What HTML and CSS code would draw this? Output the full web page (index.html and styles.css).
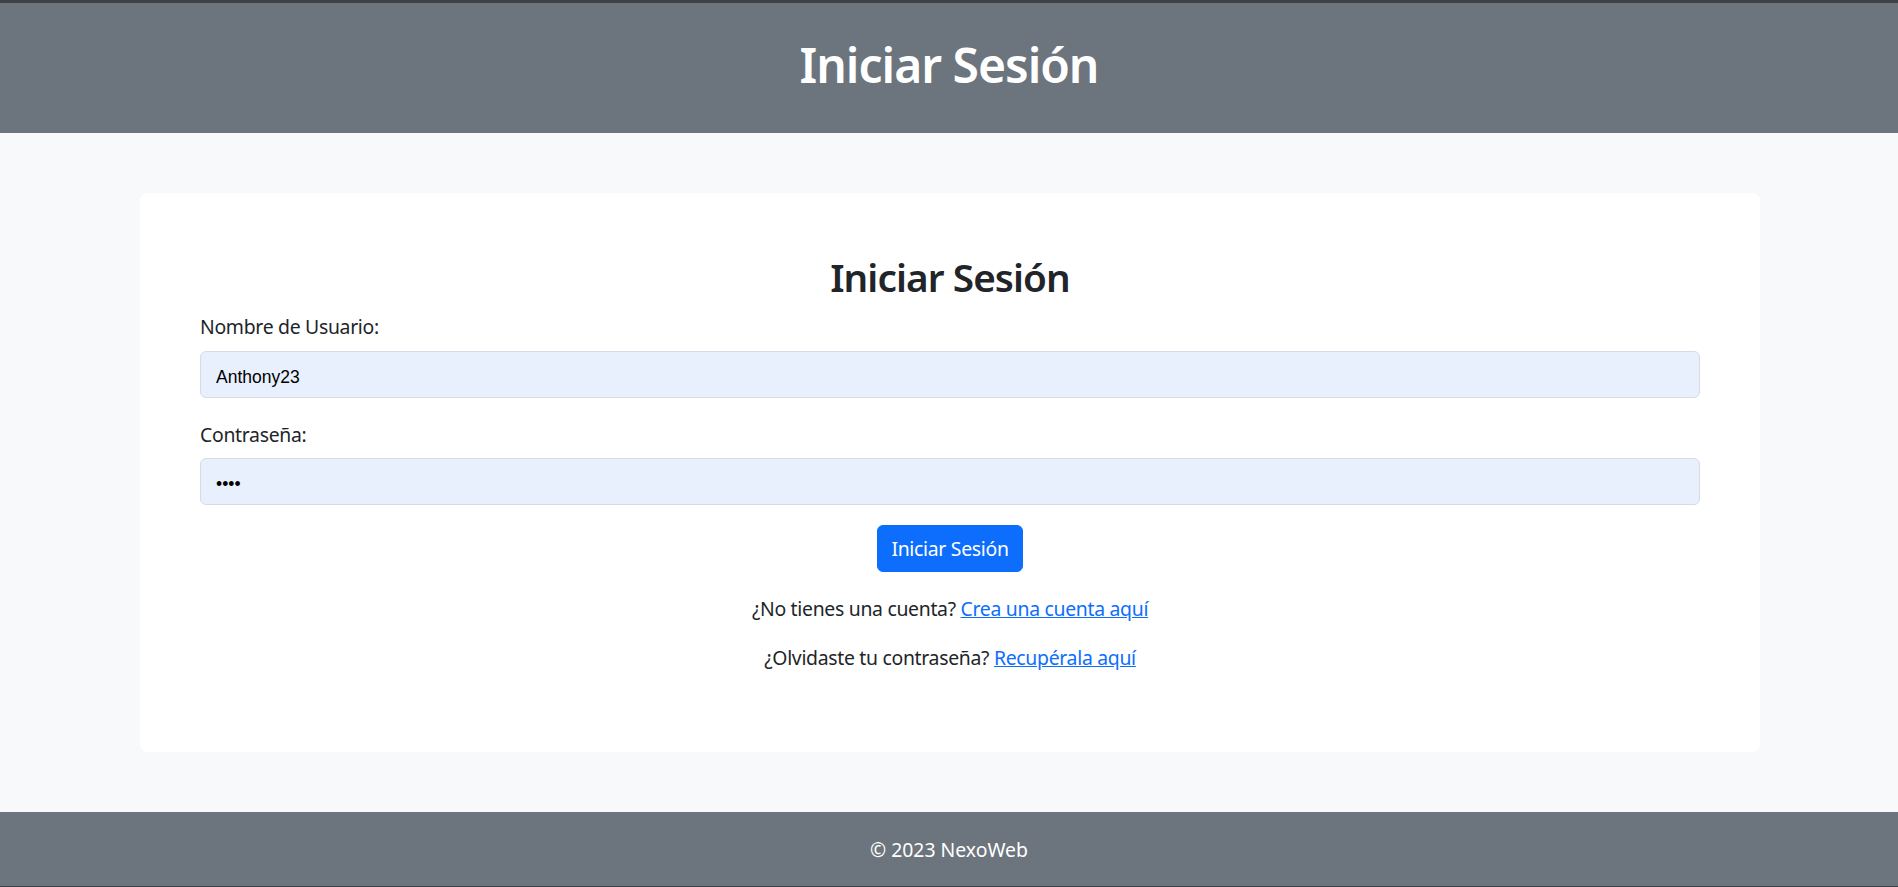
FILE: index.html
```html
<!DOCTYPE html>
<html lang="es">
<head>
<meta charset="utf-8">
<title>Iniciar Sesión</title>
<link rel="stylesheet" href="styles.css">
</head>
<body>
<header class="site-header">
  <h1 class="site-title">Iniciar Sesión</h1>
</header>
<main class="site-main">
  <section class="card">
    <h2 class="card-title">Iniciar Sesión</h2>
    <form class="login-form">
      <label class="form-label" for="user">Nombre de Usuario:</label>
      <input class="form-control" id="user" type="text" value="Anthony23">
      <label class="form-label second" for="pass">Contraseña:</label>
      <input class="form-control" id="pass" type="password" value="1234">
      <div class="btn-row"><button class="btn" type="button">Iniciar Sesión</button></div>
    </form>
    <p class="note first">¿No tienes una cuenta? <a href="#">Crea una cuenta aquí</a></p>
    <p class="note">¿Olvidaste tu contraseña? <a href="#">Recupérala aquí</a></p>
  </section>
</main>
<footer class="site-footer">
  <p class="copy">© 2023 NexoWeb</p>
</footer>
</body>
</html>
```

FILE: styles.css
```css
html, body {
  margin: 0;
  padding: 0;
}
body {
  background: #f8f9fa;
  font-family: "Noto Sans", "Open Sans", sans-serif;
  font-size: 19.4px;
  line-height: 29px;
  letter-spacing: -0.3px;
  color: #212529;
}
.site-header {
  border-top: 3px solid #3e4147;
  background: #6c757d;
  height: 130px;
  box-sizing: content-box;
}
.site-title {
  margin: 0;
  padding-top: 33px;
  text-align: center;
  color: #fff;
  font-size: 48px;
  font-weight: 600;
  letter-spacing: -1px;
  line-height: 58px;
}
.site-main {
  padding: 60px 138px 60px 140px;
}
.card {
  background: #fff;
  border-radius: 8px;
  padding: 61px 60px 60px 60px;
  height: 559px;
  box-sizing: border-box;
}
.card-title {
  margin: 0 0 12px;
  text-align: center;
  font-size: 38.7px;
  font-weight: 600;
  letter-spacing: -0.9px;
  line-height: 46px;
}
.login-form {
  display: flex;
  flex-direction: column;
}
.form-label {
  display: block;
  margin-bottom: 10px;
}
.form-label.second {
  margin-top: 22px;
  margin-bottom: 9px;
}
.form-control {
  box-sizing: border-box;
  height: 47px;
  width: 100%;
  margin: 0;
  padding: 5px 15px 0;
  border: 1px solid #d6dce5;
  border-radius: 6px;
  background: #e8f0fe;
  font-family: "Liberation Sans", Arial, sans-serif;
  font-size: 17.5px;
  letter-spacing: 0;
  color: #000;
  outline: none;
}
.btn-row {
  display: flex;
  justify-content: center;
  margin-top: 20px;
}
.btn {
  height: 47px;
  padding: 0 13.5px;
  border: 1px solid #0d6efd;
  border-radius: 6px;
  background: #0d6efd;
  color: #fff;
  font-family: inherit;
  font-size: 19.4px;
  letter-spacing: -0.3px;
  line-height: 45px;
}
.note {
  margin: 0;
  text-align: center;
}
.note.first {
  margin-top: 22px;
  margin-bottom: 20px;
}
.note a {
  color: #0d6efd;
  text-decoration: underline;
}
.site-footer {
  background: #6c757d;
  height: 74px;
  border-bottom: 1px solid #3e4147;
  display: flex;
  align-items: center;
  justify-content: center;
}
.copy {
  margin: 0;
  color: #fff;
  letter-spacing: 0;
}
```
